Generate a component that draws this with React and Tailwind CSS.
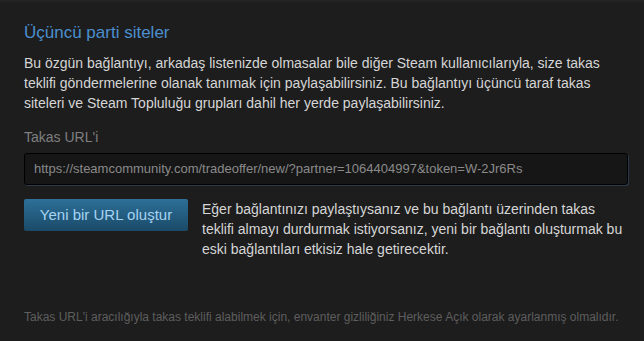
import React from 'react';

const App = () => {
  return (
    <div className="w-[644px] h-[341px] bg-[#1d1d1d] border-t-2 border-[#232323] font-['Liberation_Sans',Arial,sans-serif] pl-6 pr-4 pt-[20px]">
      <h2 className="text-[17px] leading-[22px] text-[#4b8fcf]">Üçüncü parti siteler</h2>

      <p className="mt-[9px] text-[14px] leading-[20px] text-[#d6d6d6]">
        Bu özgün bağlantıyı, arkadaş listenizde olmasalar bile diğer Steam kullanıcılarıyla, size takas teklifi göndermelerine olanak tanımak için paylaşabilirsiniz. Bu bağlantıyı üçüncü taraf takas siteleri ve Steam Topluluğu grupları dahil her yerde paylaşabilirsiniz.
      </p>

      <div className="mt-[15px] text-[14px] leading-[18px] text-[#7f7f7f]">Takas URL'i</div>

      <div className="mt-[7px] w-[604px] h-[32px] flex items-center px-[9px] rounded-[3px] border border-black bg-[#161616] shadow-[1px_1px_0_#2a3a4a] text-[13px] text-[#8a8a8a]">
        https://steamcommunity.com/tradeoffer/new/?partner=1064404997&amp;token=W-2Jr6Rs
      </div>

      <div className="mt-[14px] flex gap-[14px]">
        <button className="shrink-0 w-[164px] h-[32px] rounded-[2px] bg-gradient-to-b from-[#2d7099] to-[#1b4a68] text-[15px] text-[#a6d4f2]">
          Yeni bir URL oluştur
        </button>
        <p className="text-[14px] leading-[20px] text-[#d6d6d6]">
          Eğer bağlantınızı paylaştıysanız ve bu bağlantı üzerinden takas teklifi almayı durdurmak istiyorsanız, yeni bir bağlantı oluşturmak bu eski bağlantıları etkisiz hale getirecektir.
        </p>
      </div>

      <p className="mt-[50px] text-[12px] leading-[16px] text-[#5e5e5e]">
        Takas URL'i aracılığıyla takas teklifi alabilmek için, envanter gizliliğiniz Herkese Açık olarak ayarlanmış olmalıdır.
      </p>
    </div>
  );
};

export default App;
